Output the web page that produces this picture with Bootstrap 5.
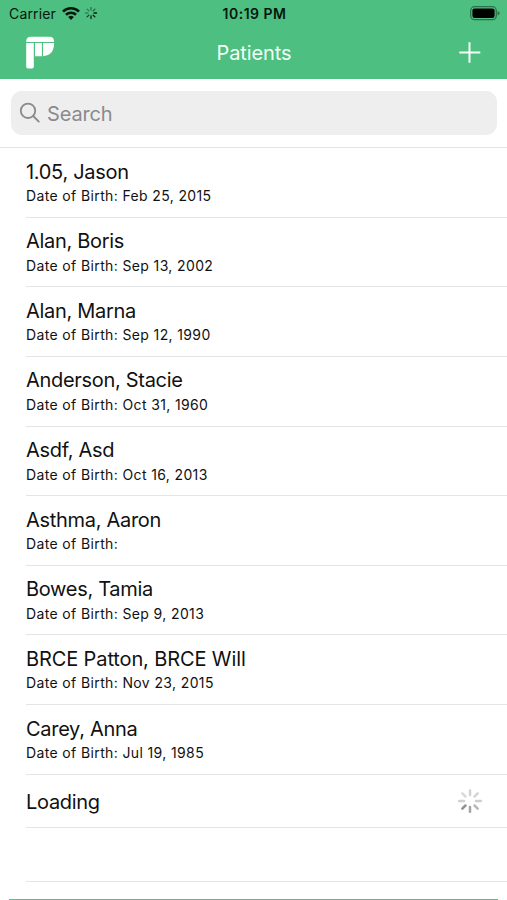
<!DOCTYPE html>
<html lang="en">
<head>
<meta charset="utf-8">
<meta name="viewport" content="width=device-width, initial-scale=1">
<title>Patients</title>
<link href="https://cdn.jsdelivr.net/npm/bootstrap@5.3.0/dist/css/bootstrap.min.css" rel="stylesheet">
<style>
body { font-family: Inter, "Liberation Sans", sans-serif; color: #111; background: #fff; height: 900px; overflow: hidden; }
svg { display: block; flex: none; }
.app-header { background: #4dbf80; height: 79px; }
.status-bar { height: 27px; padding: 0 7px 0 9px; font-size: 14px; line-height: 27px; color: #06170d; }
.status-side { flex: 1 1 0; }
.carrier { letter-spacing: .15px; }
.clock { font-weight: 600; letter-spacing: .5px; }
.title-bar { height: 52px; padding: 0 26px 0 25px; }
.page-title { font-size: 20px; line-height: 52px; font-weight: 400; color: #f0fff5; letter-spacing: -.1px; padding-left: 2px; }
.search-wrap { height: 69px; padding: 12px 10px 0 11px; border-bottom: 1px solid #e4e4e5; }
.search-box { height: 44px; border-radius: 11px; background: #eee; padding-left: 8px; color: #8a8a8e; font-size: 20px; letter-spacing: -.15px; }
.search-label { margin-left: 6px; padding-top: 2px; }
.patients { margin-left: 26px; }
.patient { height: 69.65px; padding: 11.5px 0 0; border: 0; border-bottom: 1px solid #e4e4e5; background: none; color: inherit; }
.patient-name { font-size: 20px; line-height: 24px; letter-spacing: -.3px; }
.patient-name.caps { letter-spacing: -.12px; }
.patient-dob { font-size: 14px; line-height: 18px; margin-top: 3.5px; letter-spacing: .37px; }
.loading-row { height: 53.5px; padding: 0 24px 0 0; border: 0; border-bottom: 1px solid #e4e4e5; background: none; color: inherit; }
.loading-row .patient-name { padding-top: 2px; }
.patients > .empty-row { height: 54px; padding: 0; border: 0; border-bottom: 1px solid #e4e4e5 !important; background: none; }
.bottom-bar { height: 12px; margin: 16.65px 9px 0; background: #5fbc92; }
</style>
</head>
<body>
<header class="app-header">
  <div class="status-bar d-flex align-items-center">
    <div class="status-side d-flex align-items-center">
      <span class="carrier">Carrier</span>
      <svg class="ms-1" width="20" height="14" viewBox="-2 0 20 14" fill="none" stroke="#06170d" stroke-width="2.6"><path d="M1 4.6a11.4 11.4 0 0 1 16 0M4 7.8a7.2 7.2 0 0 1 10 0"/><path d="M6.2 10a4 4 0 0 1 5.6 0L9 13z" fill="#06170d" stroke="none"/></svg>
      <svg class="ms-1" width="14" height="14" viewBox="-7 -6 14 14" stroke="#06170d" stroke-width="1.3" stroke-linecap="round"><path d="M0-3v-2.5" opacity=".45"/><path d="M2.1-2.1l1.8-1.8" opacity=".55"/><path d="M3 0h2.5M2.1 2.1l1.8 1.8"/><path d="M0 3v2.5" opacity=".9"/><path d="M-2.1 2.1l-1.8 1.8" opacity=".75"/><path d="M-3 0h-2.5" opacity=".35"/><path d="M-2.1-2.1l-1.8-1.8" opacity=".4"/></svg>
    </div>
    <span class="clock">10:19 PM</span>
    <div class="status-side d-flex justify-content-end">
      <svg width="30" height="15" viewBox="0 0 30 15"><rect x=".7" y=".7" width="25.6" height="13" rx="4" fill="none" stroke="#2b7148" stroke-width="1.3"/><rect x="2.4" y="2.4" width="22.2" height="9.6" rx="2.2" fill="#000"/><path d="M27.6 5v4.6q2-.8 2-2.3t-2-2.3" fill="#2b7148"/></svg>
    </div>
  </div>
  <div class="title-bar d-flex align-items-center">
    <div class="status-side">
      <svg width="30" height="34" viewBox="0 0 30 34" fill="#fff"><path d="M1.2 6V5.5Q1.2.7 6 .7h18.5q4.6 0 4.6 4.8V6z"/><path d="M1.2 7h7.6v23.8q0 1.8-1.8 1.8H3q-1.8 0-1.8-1.8zM10 7h6.9v13.2H10zM18 7h11.1q0 12.4-11.1 13.2z"/></svg>
    </div>
    <h1 class="page-title m-0">Patients</h1>
    <div class="status-side d-flex justify-content-end">
      <svg width="22" height="22" viewBox="0 0 22 22" stroke="#f5fff8" stroke-width="2"><path d="M10.5 .3v20.4M.3 10.5h21"/></svg>
    </div>
  </div>
</header>
<main>
  <div class="search-wrap">
    <div class="search-box d-flex align-items-center">
      <svg width="22" height="22" viewBox="0 0 22 22" fill="none" stroke="#8a8a8e" stroke-width="1.8" stroke-linecap="round"><circle cx="9" cy="8.8" r="7.2"/><path d="M14.2 14l5.6 5.6"/></svg>
      <span class="search-label">Search</span>
    </div>
  </div>
  <div class="patients list-group list-group-flush">
    <div class="list-group-item patient"><div class="patient-name">1.05, Jason</div><div class="patient-dob">Date of Birth: Feb 25, 2015</div></div>
    <div class="list-group-item patient"><div class="patient-name">Alan, Boris</div><div class="patient-dob">Date of Birth: Sep 13, 2002</div></div>
    <div class="list-group-item patient"><div class="patient-name">Alan, Marna</div><div class="patient-dob">Date of Birth: Sep 12, 1990</div></div>
    <div class="list-group-item patient"><div class="patient-name">Anderson, Stacie</div><div class="patient-dob">Date of Birth: Oct 31, 1960</div></div>
    <div class="list-group-item patient"><div class="patient-name">Asdf, Asd</div><div class="patient-dob">Date of Birth: Oct 16, 2013</div></div>
    <div class="list-group-item patient"><div class="patient-name">Asthma, Aaron</div><div class="patient-dob">Date of Birth:</div></div>
    <div class="list-group-item patient"><div class="patient-name">Bowes, Tamia</div><div class="patient-dob">Date of Birth: Sep 9, 2013</div></div>
    <div class="list-group-item patient"><div class="patient-name caps">BRCE Patton, BRCE Will</div><div class="patient-dob">Date of Birth: Nov 23, 2015</div></div>
    <div class="list-group-item patient"><div class="patient-name">Carey, Anna</div><div class="patient-dob">Date of Birth: Jul 19, 1985</div></div>
    <div class="list-group-item loading-row d-flex align-items-center justify-content-between">
      <span class="patient-name">Loading</span>
      <svg width="26" height="26" viewBox="-13 -13 26 26" stroke-width="2.5" stroke-linecap="round"><path d="M0-6v-4.6" stroke="#d2d2d2"/><path d="M4.5-4.5l3.2-3.2" stroke="#d6d6d6"/><path d="M6 0h4.8" stroke="#cdcdcd"/><path d="M4.5 4.5l3.2 3.2" stroke="#b8b8b8"/><path d="M0 6v4.8" stroke="#a4a4a4"/><path d="M-4.5 4.5l-3.2 3.2" stroke="#939393"/><path d="M-6 0h-4.8" stroke="#d0d0d0"/><path d="M-4.5-4.5l-3.2-3.2" stroke="#dadada"/></svg>
    </div>
    <div class="list-group-item empty-row"></div>
  </div>
  <div class="bottom-bar"></div>
</main>
<script src="https://cdn.jsdelivr.net/npm/bootstrap@5.3.0/dist/js/bootstrap.bundle.min.js"></script>
</body>
</html>
